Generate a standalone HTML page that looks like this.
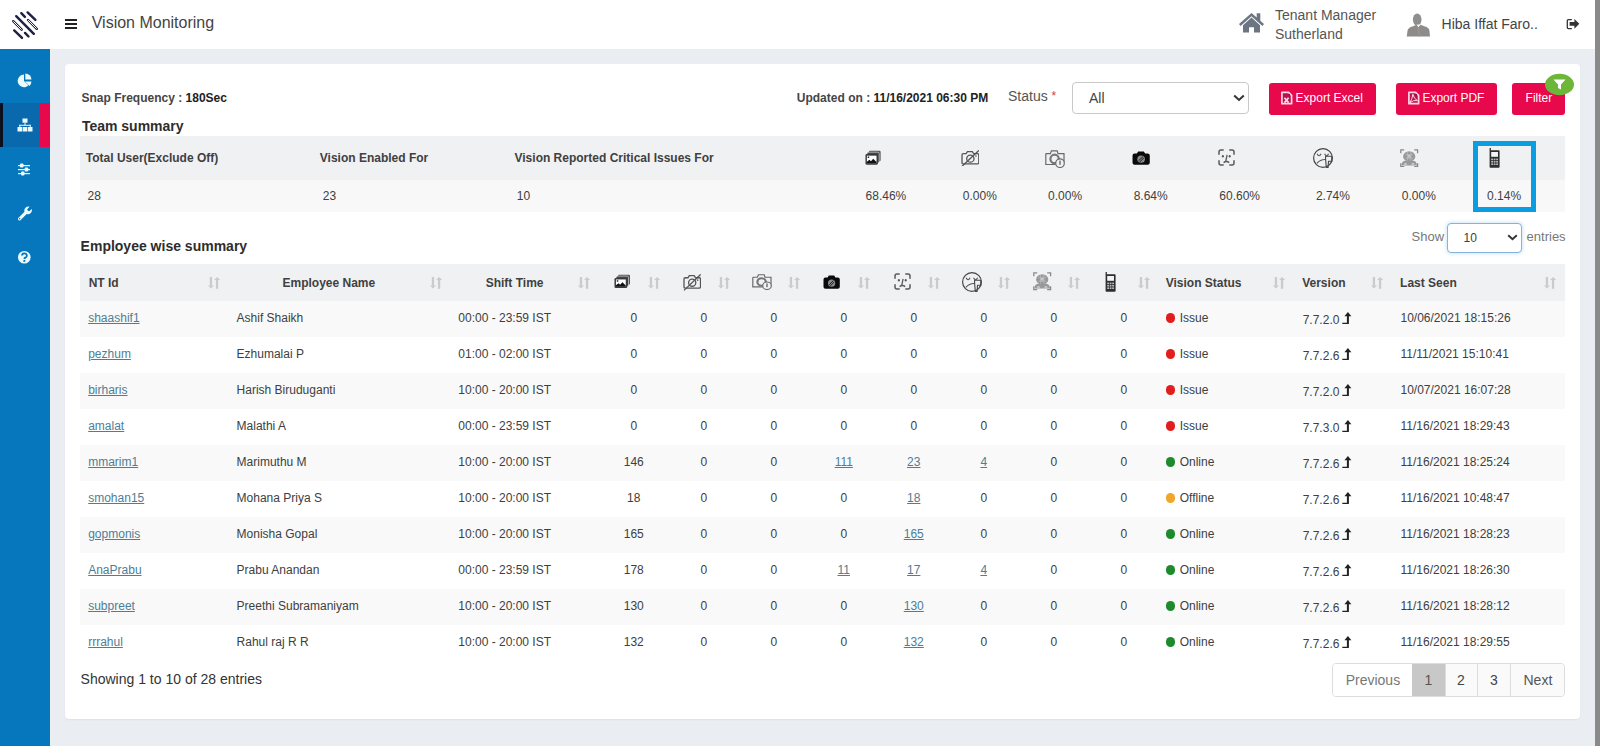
<!DOCTYPE html>
<html><head><meta charset="utf-8"><title>Vision Monitoring</title>
<style>
html,body{margin:0;padding:0;}
body{width:1600px;height:746px;overflow:hidden;position:relative;background:#eaedf1;font-family:"Liberation Sans",sans-serif;}
.t{position:absolute;white-space:nowrap;}
.r{position:absolute;}
a{color:inherit;}
</style></head><body>
<div class="r" style="left:0px;top:0px;width:1595px;height:49px;background:#fff;"></div>
<div class="r" style="left:1595px;top:0px;width:5px;height:746px;background:#8a8a8a;"></div>
<div class="r" style="left:0px;top:49px;width:50px;height:697px;background:#0676bd;"></div>
<div class="r" style="left:0px;top:103px;width:50px;height:44px;background:#0a68ad;"></div>
<div class="r" style="left:0px;top:103px;width:3px;height:44px;background:#0b0f1e;"></div>
<div class="r" style="left:40px;top:103px;width:10px;height:44px;background:#e8094d;"></div>
<div class="r" style="left:65px;top:64px;width:1515px;height:655px;background:#fff;border-radius:4px;box-shadow:0 1px 2px rgba(0,0,0,0.06);"></div>
<svg class="r" style="left:0px;top:0px;" width="50" height="50" viewBox="0 0 50 50"><g stroke="#1d2045" stroke-width="2.4" stroke-linecap="round" fill="none">
<line x1="21.3" y1="13.2" x2="24.9" y2="16.9"/>
<line x1="27.6" y1="12.4" x2="35.4" y2="19.9"/>
<line x1="16.2" y1="16.2" x2="33.8" y2="33.8"/>
<line x1="14.2" y1="30.4" x2="22" y2="37.9"/>
<line x1="25" y1="32.9" x2="28.5" y2="36.5"/>
<line x1="13.2" y1="21.2" x2="21.7" y2="29.7"/>
<line x1="28" y1="20" x2="36.8" y2="28.8"/>
</g>
<g stroke="#fff" stroke-width="1" stroke-linecap="round" fill="none">
<line x1="13.6" y1="21.6" x2="21.3" y2="29.3"/>
<line x1="28.4" y1="20.4" x2="36.4" y2="28.4"/>
</g></svg>
<div class="r" style="left:65px;top:19px;width:12px;height:2px;background:#222;"></div>
<div class="r" style="left:65px;top:23px;width:12px;height:2px;background:#222;"></div>
<div class="r" style="left:65px;top:27px;width:12px;height:2px;background:#222;"></div>
<div class="t " style="left:91.70px;top:15.06px;font-size:16px;line-height:16px;font-weight:400;color:#444;">Vision Monitoring</div>
<svg class="r" style="left:1238px;top:12px;" width="27" height="22" viewBox="0 0 27 22"><path fill="#6c7580" d="M13.5 1 L18.7 5.6 V1.2 H22.3 V8.8 L26 12.1 L24.4 13.9 L13.5 4.3 L2.6 13.9 L1 12.1 Z"/>
<path fill="#6c7580" d="M5 13.2 L13.5 5.6 L22 13.2 V20.6 H16 V15.2 H11 V20.6 H5 Z"/></svg>
<div class="t " style="left:1275.00px;top:7.85px;font-size:14px;line-height:14px;font-weight:400;color:#555;">Tenant Manager</div>
<div class="t " style="left:1275.00px;top:27.05px;font-size:14px;line-height:14px;font-weight:400;color:#555;">Sutherland</div>
<svg class="r" style="left:1406px;top:12px;" width="25" height="26" viewBox="0 0 25 26"><ellipse cx="11.2" cy="7.6" rx="4.3" ry="6.1" fill="#8e8e8e"/>
<path d="M0.8 24.6 L1.6 18.2 Q2.4 15.4 6.5 14.4 L10.6 12.8 L12.4 15 L14.6 12.8 L19 14.4 Q22.8 15.4 23.4 18.2 L24 24.6 Z" fill="#8c8c8c"/>
<path d="M10.6 12.8 L12.4 15 L14.6 12.8 L13.4 12.4 H11.4 Z" fill="#f2f2f2"/>
<path d="M11.6 15.4 L12.6 24.6 H13.6 L13.2 15.4 Z" fill="#a89484"/></svg>
<div class="t " style="left:1441.60px;top:16.65px;font-size:14px;line-height:14px;font-weight:400;color:#444;">Hiba Iffat Faro..</div>
<svg class="r" style="left:1566px;top:19px;" width="14" height="11" viewBox="0 0 14 11"><path d="M5.8 0.7 H2.4 Q1.3 0.7 1.3 1.8 V8.6 Q1.3 9.7 2.4 9.7 H5.8" stroke="#333" stroke-width="1.3" fill="none"/>
<path d="M3.6 3 H8.4 V0.1 L13.3 4.85 L8.4 9.7 V6.8 H3.6 Z" fill="#333"/></svg>
<svg class="r" style="left:17px;top:73px;" width="16" height="15" viewBox="0 0 16 15"><path d="M7 7.9 V1.6 A6.3 6.3 0 1 0 11.45 12.35 Z" fill="#eafbff"/>
<path d="M8.3 6.6 V0.4 A6.2 6.2 0 0 1 14.5 6.6 Z" fill="#eafbff"/>
<path d="M8 8.6 H14.4 A6.4 6.4 0 0 1 12.5 13.1 Z" fill="#eafbff"/></svg>
<svg class="r" style="left:17px;top:118px;" width="16" height="15" viewBox="0 0 16 15"><g fill="#eafbff"><rect x="5.5" y="0.5" width="5" height="4.2"/>
<rect x="0.5" y="9" width="4.6" height="4.5"/><rect x="5.7" y="9" width="4.6" height="4.5"/><rect x="10.9" y="9" width="4.6" height="4.5"/>
<rect x="7.5" y="4.5" width="1" height="3"/><rect x="2.3" y="6.8" width="11.4" height="1"/>
<rect x="2.3" y="6.8" width="1" height="2.2"/><rect x="12.7" y="6.8" width="1" height="2.2"/></g></svg>
<svg class="r" style="left:17px;top:163px;" width="14" height="13" viewBox="0 0 14 13"><g fill="#eafbff"><rect x="1" y="2" width="12" height="1.2"/><rect x="1" y="6" width="12" height="1.2"/><rect x="1" y="10" width="12" height="1.2"/>
<rect x="3" y="0.5" width="3.5" height="4" rx="1"/><rect x="7.7" y="4.5" width="3.5" height="4" rx="1"/><rect x="4" y="8.5" width="3.5" height="4" rx="1"/></g></svg>
<svg class="r" style="left:17px;top:206px;" width="15" height="15" viewBox="0 0 15 15"><path fill="#eafbff" d="M1.5 11.8 L7.5 5.8 A4 4 0 0 1 12.6 0.8 L10.2 3.2 L10.8 4.7 L12.3 5.3 L14.7 2.9 A4 4 0 0 1 9.7 8 L3.7 14 A1.55 1.55 0 0 1 1.5 11.8 Z"/>
<circle cx="2.7" cy="12.8" r="0.7" fill="#0676bd"/></svg>
<svg class="r" style="left:17px;top:250px;" width="15" height="15" viewBox="0 0 15 15"><circle cx="7.3" cy="7.3" r="6.3" fill="#eafbff"/>
<path d="M5 5.6 A2.4 2.2 0 1 1 8.3 7.6 Q7.4 8 7.4 9" stroke="#0676bd" stroke-width="1.8" fill="none"/>
<rect x="6.4" y="10" width="1.9" height="1.8" fill="#0676bd"/></svg>
<div class="t " style="left:81.50px;top:91.74px;font-size:12px;line-height:12px;font-weight:700;color:#454545;">Snap Frequency : <b style="color:#222">180Sec</b></div>
<div class="t " style="left:796.80px;top:91.54px;font-size:12px;line-height:12px;font-weight:700;color:#454545;">Updated on : <span style="color:#222">11/16/2021 06:30 PM</span></div>
<div class="t " style="left:1008.00px;top:89.05px;font-size:14px;line-height:14px;font-weight:400;color:#555;">Status</div>
<div class="t " style="left:1051.50px;top:90.04px;font-size:12px;line-height:12px;font-weight:400;color:#d9383a;">*</div>
<div class="r" style="left:1072px;top:82px;width:177px;height:32px;box-sizing:border-box;border:1px solid #c9c9c9;border-radius:4px;background:#fff;"></div>
<div class="t " style="left:1089.00px;top:91.05px;font-size:14px;line-height:14px;font-weight:400;color:#444;">All</div>
<svg class="r" style="left:1233px;top:94px;" width="12" height="8" viewBox="0 0 12 8"><path d="M1.2 1.5 L6 6 L10.8 1.5" stroke="#333" stroke-width="2" fill="none"/></svg>
<div class="r" style="left:1269px;top:83px;width:107px;height:32px;background:#e8084c;border-radius:3px;"></div>
<div class="r" style="left:1396px;top:83px;width:101px;height:32px;background:#e8084c;border-radius:3px;"></div>
<div class="r" style="left:1512px;top:83px;width:53px;height:32px;background:#e8084c;border-radius:3px;"></div>
<svg class="r" style="left:1280px;top:91px;" width="13" height="14" viewBox="0 0 13 14"><path d="M1.9 1.3 H8.6 L11.6 4.3 V12.7 H1.9 Z" fill="#b8114d" stroke="#ffd6e4" stroke-width="1.7" stroke-linejoin="round"/>
<circle cx="9.3" cy="3.7" r="0.8" fill="#8a0a38"/>
<path d="M4.4 6.8 L8.6 11.6 M8.6 6.8 L4.4 11.6" stroke="#ffe0ea" stroke-width="1.7"/></svg>
<div class="t " style="left:1295.60px;top:92.24px;font-size:12px;line-height:12px;font-weight:400;color:#fff;">Export Excel</div>
<svg class="r" style="left:1407px;top:91px;" width="13" height="14" viewBox="0 0 13 14"><path d="M1.9 1.3 H8.6 L11.6 4.3 V12.7 H1.9 Z" fill="#b8114d" stroke="#ffd6e4" stroke-width="1.7" stroke-linejoin="round"/>
<circle cx="9.3" cy="3.7" r="0.8" fill="#8a0a38"/>
<path d="M5.8 3.2 Q5.4 7.5 3 11.6 Q6.5 8.8 10.4 9.6 Q7 8 5.8 3.2 Z" stroke="#ffd6e4" stroke-width="1" fill="none"/></svg>
<div class="t " style="left:1422.40px;top:92.24px;font-size:12px;line-height:12px;font-weight:400;color:#fff;">Export PDF</div>
<div class="t " style="left:1525.60px;top:92.24px;font-size:12px;line-height:12px;font-weight:400;color:#fff;">Filter</div>
<svg class="r" style="left:1544px;top:73px;" width="31" height="23" viewBox="0 0 31 23"><ellipse cx="15.5" cy="11.5" rx="14.5" ry="10.7" fill="#6cb63a"/>
<path d="M9.5 6.5 H21.5 L17 11.5 V16.5 L14 15 V11.5 Z" fill="#fff"/></svg>
<div class="t " style="left:81.90px;top:118.75px;font-size:14px;line-height:14px;font-weight:700;color:#2d2d2d;">Team summary</div>
<div class="r" style="left:80px;top:136px;width:1485px;height:44px;background:#f0f1f3;"></div>
<div class="r" style="left:80px;top:180px;width:1485px;height:32px;background:#f8f8f9;"></div>
<div class="t " style="left:85.80px;top:152.04px;font-size:12px;line-height:12px;font-weight:700;color:#404040;">Total User(Exclude Off)</div>
<div class="t " style="left:319.80px;top:152.04px;font-size:12px;line-height:12px;font-weight:700;color:#404040;">Vision Enabled For</div>
<div class="t " style="left:514.50px;top:152.04px;font-size:12px;line-height:12px;font-weight:700;color:#404040;">Vision Reported Critical Issues For</div>
<div class="t " style="left:87.60px;top:189.74px;font-size:12px;line-height:12px;font-weight:400;color:#404040;">28</div>
<div class="t " style="left:322.80px;top:189.74px;font-size:12px;line-height:12px;font-weight:400;color:#404040;">23</div>
<div class="t " style="left:516.80px;top:189.74px;font-size:12px;line-height:12px;font-weight:400;color:#404040;">10</div>
<div class="t " style="left:865.60px;top:189.64px;font-size:12px;line-height:12px;font-weight:400;color:#404040;">68.46%</div>
<div class="t " style="left:962.80px;top:189.64px;font-size:12px;line-height:12px;font-weight:400;color:#404040;">0.00%</div>
<div class="t " style="left:1048.10px;top:189.64px;font-size:12px;line-height:12px;font-weight:400;color:#404040;">0.00%</div>
<div class="t " style="left:1133.70px;top:189.64px;font-size:12px;line-height:12px;font-weight:400;color:#404040;">8.64%</div>
<div class="t " style="left:1219.30px;top:189.64px;font-size:12px;line-height:12px;font-weight:400;color:#404040;">60.60%</div>
<div class="t " style="left:1315.90px;top:189.64px;font-size:12px;line-height:12px;font-weight:400;color:#404040;">2.74%</div>
<div class="t " style="left:1401.80px;top:189.64px;font-size:12px;line-height:12px;font-weight:400;color:#404040;">0.00%</div>
<div class="t " style="left:1487.10px;top:189.64px;font-size:12px;line-height:12px;font-weight:400;color:#404040;">0.14%</div>
<div class="r" style="left:1473px;top:141px;width:63px;height:71px;box-sizing:border-box;border:5px solid #0a9de2;"></div>
<svg class="r" style="left:864.7px;top:150px;" width="16.30" height="15.20" viewBox="0 0 17 15" preserveAspectRatio="none"><rect x="4" y="0.7" width="12.3" height="10.3" rx="1.2" fill="#555"/>
<rect x="2.2" y="2.2" width="12.6" height="10.4" rx="1.2" fill="#444" stroke="#f0f1f3" stroke-width="0.6"/>
<rect x="0.5" y="4" width="13" height="10.5" rx="1.4" fill="#3a3a3a"/>
<rect x="2" y="5.6" width="10" height="7.4" fill="#fff"/>
<path d="M2 13 L2 11.6 L4.6 9.6 L6.2 11 L8.6 8.6 L12 11.8 L12 13 Z" fill="#111"/>
<circle cx="3.6" cy="7.1" r="0.9" fill="#333"/></svg>
<svg class="r" style="left:960.6px;top:149.8px;" width="18.80" height="16.70" viewBox="0 0 18.5 17" preserveAspectRatio="none"><g stroke="#555" stroke-width="1.3" fill="none">
<path d="M1 5 Q1 3.8 2.2 3.8 H5 L6.3 1.6 H11.2 L12.5 3.8 H16.3 Q17.5 3.8 17.5 5 V13 Q17.5 14.2 16.3 14.2 H2.2 Q1 14.2 1 13 Z"/>
<circle cx="9.2" cy="8.8" r="3.6"/>
<line x1="1" y1="16.6" x2="17.6" y2="0.4"/></g>
<circle cx="14.7" cy="6.2" r="0.8" fill="#555"/></svg>
<svg class="r" style="left:1045px;top:150px;" width="20.50" height="18.00" viewBox="0 0 20.5 18" preserveAspectRatio="none"><g stroke="#6a6a6a" fill="none">
<path d="M0.8 3.6 H5.4 L6.4 0.9 H12.2 L13 3.6 H19 V12" stroke-width="1.2"/>
<path d="M0.8 3.6 V14.5 H10.5" stroke-width="1.2"/>
<circle cx="9.6" cy="8.9" r="4.2" stroke-width="2.2" stroke="#777"/></g>
<circle cx="15" cy="13.2" r="4.3" fill="#f0f1f3" stroke="#6a6a6a" stroke-width="1.2"/>
<rect x="14.4" y="10.6" width="1.2" height="4.2" fill="#555"/></svg>
<svg class="r" style="left:1131.7px;top:151px;" width="18.30" height="14.20" viewBox="0 0 17.3 14.2" preserveAspectRatio="none"><path d="M0.5 4.5 Q0.5 2.6 2.4 2.6 H4.6 L5.8 0.4 H11.2 L12.4 2.6 H14.8 Q16.8 2.6 16.8 4.5 V11.8 Q16.8 13.8 14.8 13.8 H2.4 Q0.5 13.8 0.5 11.8 Z" fill="#0a0a0a"/>
<circle cx="8.6" cy="8.2" r="3.6" fill="#8a8a8a"/>
<path d="M6.2 9.8 L10.4 5.6 M7.2 11 L11.2 7" stroke="#111" stroke-width="0.9"/></svg>
<svg class="r" style="left:1218.3px;top:149px;" width="17.00" height="17.00" viewBox="0 0 17 17" preserveAspectRatio="none"><g stroke="#5a5a5a" stroke-width="1.5" fill="none" stroke-linecap="round">
<path d="M1 5.2 V3 Q1 1 3 1 H5.2"/><path d="M11.8 1 H14 Q16 1 16 3 V5.2"/>
<path d="M1 11.8 V14 Q1 16 3 16 H5.2"/><path d="M11.8 16 H14 Q16 16 16 14 V11.8"/></g>
<g stroke="#5a5a5a" fill="none"><path d="M9.1 5.8 L7.8 12.2" stroke-width="1.3"/><path d="M5.6 13.6 Q8.4 11.4 11.2 13.6" stroke-width="1.4"/></g>
<ellipse cx="4.9" cy="7.2" rx="1" ry="1.3" fill="#555"/><ellipse cx="11.7" cy="7.2" rx="1" ry="1.3" fill="#555"/></svg>
<svg class="r" style="left:1313px;top:148px;" width="20.40" height="20.40" viewBox="0 0 20.4 20.4" preserveAspectRatio="none"><g stroke="#555" stroke-width="1.1" fill="none">
<path d="M4.1 5.8 Q6.1 9.8 8.1 5.8"/><path d="M11.6 5.8 Q13.6 9.8 15.6 5.8"/>
<path d="M3.8 15.4 Q7.8 11.2 12.6 11.6"/></g>
<path d="M12.6 8.2 H18.8 V13.3 H15.5 L15.1 19.4 H13.3 L12.6 11 Z" fill="#f0f1f3" stroke="#444" stroke-width="1.1" stroke-linejoin="round"/>
<circle cx="10" cy="10" r="9.4" stroke="#444" stroke-width="1.2" fill="none"/></svg>
<svg class="r" style="left:1400px;top:148.6px;" width="18.50" height="18.50" viewBox="0 0 18.5 18.5" preserveAspectRatio="none"><g stroke="#8a8a8a" stroke-width="1.3" fill="none">
<path d="M0.8 4.2 V0.8 H4.2"/><path d="M14.2 0.8 H17.6 V4.2"/><path d="M0.8 14.2 V17.6 H4.2"/><path d="M14.2 17.6 H17.6 V14.2"/></g>
<ellipse cx="9.2" cy="7.4" rx="6.1" ry="5.2" fill="#999"/>
<path d="M5.6 5.6 H12.8 M5.6 9.2 H12.8 M7.6 3 V12 M10.8 3 V12" stroke="#b8b8b8" stroke-width="0.9"/>
<rect x="7.8" y="6" width="2.8" height="2.6" fill="#c8c8c8"/>
<path d="M1.4 16.4 Q1.6 11.6 6 11.4 H12.4 Q16.8 11.6 17 16.4 Z" fill="#999"/>
<path d="M3.6 15.6 Q5.4 12.8 7.4 15.6 Z M11 15.6 Q13 12.8 14.8 15.6 Z" fill="#e6e6e6"/></svg>
<svg class="r" style="left:1488.6px;top:148px;" width="11.20" height="19.80" viewBox="0 0 11.2 19.8" preserveAspectRatio="none"><rect x="0.6" y="0" width="1.3" height="3" fill="#333"/>
<rect x="0.6" y="2.3" width="10" height="17.4" rx="0.8" fill="#2e2e2e"/>
<rect x="2.2" y="4" width="6.8" height="4.8" fill="#f4f4f4"/>
<g fill="#bbb"><rect x="2.2" y="10.6" width="1.8" height="1.6"/><rect x="4.7" y="10.6" width="1.8" height="1.6"/><rect x="7.2" y="10.6" width="1.8" height="1.6"/>
<rect x="2.2" y="13" width="1.8" height="1.6"/><rect x="4.7" y="13" width="1.8" height="1.6"/><rect x="7.2" y="13" width="1.8" height="1.6"/>
<rect x="2.2" y="15.4" width="1.8" height="1.6"/><rect x="4.7" y="15.4" width="1.8" height="1.6"/><rect x="7.2" y="15.4" width="1.8" height="1.6"/></g></svg>
<div class="t " style="left:80.60px;top:239.15px;font-size:14px;line-height:14px;font-weight:700;color:#2d2d2d;">Employee wise summary</div>
<div class="t " style="left:1411.60px;top:229.60px;font-size:13px;line-height:13px;font-weight:400;color:#777;">Show</div>
<div class="r" style="left:1447px;top:223px;width:75px;height:30px;box-sizing:border-box;border:1px solid #86b3d9;border-radius:4px;background:#fff;box-shadow:0 0 4px rgba(102,175,233,0.45);"></div>
<div class="t " style="left:1463.60px;top:231.64px;font-size:12px;line-height:12px;font-weight:400;color:#404040;">10</div>
<svg class="r" style="left:1506.5px;top:234px;" width="11" height="7" viewBox="0 0 11 7"><path d="M1.2 1.2 L5.5 5.3 L9.8 1.2" stroke="#333" stroke-width="1.9" fill="none"/></svg>
<div class="t " style="left:1526.60px;top:229.60px;font-size:13px;line-height:13px;font-weight:400;color:#777;">entries</div>
<div class="r" style="left:80px;top:264px;width:1485px;height:37px;background:#f0f1f3;"></div>
<div class="t " style="left:88.70px;top:276.84px;font-size:12px;line-height:12px;font-weight:700;color:#404040;">NT Id</div>
<div class="t " style="left:282.50px;top:276.84px;font-size:12px;line-height:12px;font-weight:700;color:#404040;">Employee Name</div>
<div class="t " style="left:485.70px;top:276.84px;font-size:12px;line-height:12px;font-weight:700;color:#404040;">Shift Time</div>
<div class="t " style="left:1165.70px;top:276.84px;font-size:12px;line-height:12px;font-weight:700;color:#404040;">Vision Status</div>
<div class="t " style="left:1302.20px;top:276.84px;font-size:12px;line-height:12px;font-weight:700;color:#404040;">Version</div>
<div class="t " style="left:1400.10px;top:276.84px;font-size:12px;line-height:12px;font-weight:700;color:#404040;">Last Seen</div>
<svg class="r" style="left:208.3px;top:277px;" width="12" height="12" viewBox="0 0 12 12"><g fill="#cbcbcb"><rect x="1.8" y="0" width="2.3" height="8.8"/><path d="M-0.1 8.4 H6 L2.95 11.6 Z"/><rect x="7.9" y="2.6" width="2.3" height="9.2"/><path d="M6.1 2.9 H12.1 L9.05 0 Z"/></g></svg>
<svg class="r" style="left:429.8px;top:277px;" width="12" height="12" viewBox="0 0 12 12"><g fill="#cbcbcb"><rect x="1.8" y="0" width="2.3" height="8.8"/><path d="M-0.1 8.4 H6 L2.95 11.6 Z"/><rect x="7.9" y="2.6" width="2.3" height="9.2"/><path d="M6.1 2.9 H12.1 L9.05 0 Z"/></g></svg>
<svg class="r" style="left:578.3px;top:277px;" width="12" height="12" viewBox="0 0 12 12"><g fill="#cbcbcb"><rect x="1.8" y="0" width="2.3" height="8.8"/><path d="M-0.1 8.4 H6 L2.95 11.6 Z"/><rect x="7.9" y="2.6" width="2.3" height="9.2"/><path d="M6.1 2.9 H12.1 L9.05 0 Z"/></g></svg>
<svg class="r" style="left:648.0px;top:277px;" width="12" height="12" viewBox="0 0 12 12"><g fill="#cbcbcb"><rect x="1.8" y="0" width="2.3" height="8.8"/><path d="M-0.1 8.4 H6 L2.95 11.6 Z"/><rect x="7.9" y="2.6" width="2.3" height="9.2"/><path d="M6.1 2.9 H12.1 L9.05 0 Z"/></g></svg>
<svg class="r" style="left:718.0px;top:277px;" width="12" height="12" viewBox="0 0 12 12"><g fill="#cbcbcb"><rect x="1.8" y="0" width="2.3" height="8.8"/><path d="M-0.1 8.4 H6 L2.95 11.6 Z"/><rect x="7.9" y="2.6" width="2.3" height="9.2"/><path d="M6.1 2.9 H12.1 L9.05 0 Z"/></g></svg>
<svg class="r" style="left:788.0px;top:277px;" width="12" height="12" viewBox="0 0 12 12"><g fill="#cbcbcb"><rect x="1.8" y="0" width="2.3" height="8.8"/><path d="M-0.1 8.4 H6 L2.95 11.6 Z"/><rect x="7.9" y="2.6" width="2.3" height="9.2"/><path d="M6.1 2.9 H12.1 L9.05 0 Z"/></g></svg>
<svg class="r" style="left:858.0px;top:277px;" width="12" height="12" viewBox="0 0 12 12"><g fill="#cbcbcb"><rect x="1.8" y="0" width="2.3" height="8.8"/><path d="M-0.1 8.4 H6 L2.95 11.6 Z"/><rect x="7.9" y="2.6" width="2.3" height="9.2"/><path d="M6.1 2.9 H12.1 L9.05 0 Z"/></g></svg>
<svg class="r" style="left:928.0px;top:277px;" width="12" height="12" viewBox="0 0 12 12"><g fill="#cbcbcb"><rect x="1.8" y="0" width="2.3" height="8.8"/><path d="M-0.1 8.4 H6 L2.95 11.6 Z"/><rect x="7.9" y="2.6" width="2.3" height="9.2"/><path d="M6.1 2.9 H12.1 L9.05 0 Z"/></g></svg>
<svg class="r" style="left:998.0px;top:277px;" width="12" height="12" viewBox="0 0 12 12"><g fill="#cbcbcb"><rect x="1.8" y="0" width="2.3" height="8.8"/><path d="M-0.1 8.4 H6 L2.95 11.6 Z"/><rect x="7.9" y="2.6" width="2.3" height="9.2"/><path d="M6.1 2.9 H12.1 L9.05 0 Z"/></g></svg>
<svg class="r" style="left:1068.0px;top:277px;" width="12" height="12" viewBox="0 0 12 12"><g fill="#cbcbcb"><rect x="1.8" y="0" width="2.3" height="8.8"/><path d="M-0.1 8.4 H6 L2.95 11.6 Z"/><rect x="7.9" y="2.6" width="2.3" height="9.2"/><path d="M6.1 2.9 H12.1 L9.05 0 Z"/></g></svg>
<svg class="r" style="left:1138.0px;top:277px;" width="12" height="12" viewBox="0 0 12 12"><g fill="#cbcbcb"><rect x="1.8" y="0" width="2.3" height="8.8"/><path d="M-0.1 8.4 H6 L2.95 11.6 Z"/><rect x="7.9" y="2.6" width="2.3" height="9.2"/><path d="M6.1 2.9 H12.1 L9.05 0 Z"/></g></svg>
<svg class="r" style="left:1273.2px;top:277px;" width="12" height="12" viewBox="0 0 12 12"><g fill="#cbcbcb"><rect x="1.8" y="0" width="2.3" height="8.8"/><path d="M-0.1 8.4 H6 L2.95 11.6 Z"/><rect x="7.9" y="2.6" width="2.3" height="9.2"/><path d="M6.1 2.9 H12.1 L9.05 0 Z"/></g></svg>
<svg class="r" style="left:1371.0px;top:277px;" width="12" height="12" viewBox="0 0 12 12"><g fill="#cbcbcb"><rect x="1.8" y="0" width="2.3" height="8.8"/><path d="M-0.1 8.4 H6 L2.95 11.6 Z"/><rect x="7.9" y="2.6" width="2.3" height="9.2"/><path d="M6.1 2.9 H12.1 L9.05 0 Z"/></g></svg>
<svg class="r" style="left:1544.3px;top:277px;" width="12" height="12" viewBox="0 0 12 12"><g fill="#cbcbcb"><rect x="1.8" y="0" width="2.3" height="8.8"/><path d="M-0.1 8.4 H6 L2.95 11.6 Z"/><rect x="7.9" y="2.6" width="2.3" height="9.2"/><path d="M6.1 2.9 H12.1 L9.05 0 Z"/></g></svg>
<svg class="r" style="left:613.6px;top:274px;" width="16.70" height="14.60" viewBox="0 0 17 15" preserveAspectRatio="none"><rect x="4" y="0.7" width="12.3" height="10.3" rx="1.2" fill="#555"/>
<rect x="2.2" y="2.2" width="12.6" height="10.4" rx="1.2" fill="#444" stroke="#f0f1f3" stroke-width="0.6"/>
<rect x="0.5" y="4" width="13" height="10.5" rx="1.4" fill="#3a3a3a"/>
<rect x="2" y="5.6" width="10" height="7.4" fill="#fff"/>
<path d="M2 13 L2 11.6 L4.6 9.6 L6.2 11 L8.6 8.6 L12 11.8 L12 13 Z" fill="#111"/>
<circle cx="3.6" cy="7.1" r="0.9" fill="#333"/></svg>
<svg class="r" style="left:682.8px;top:274px;" width="18.50" height="16.80" viewBox="0 0 18.5 17" preserveAspectRatio="none"><g stroke="#555" stroke-width="1.3" fill="none">
<path d="M1 5 Q1 3.8 2.2 3.8 H5 L6.3 1.6 H11.2 L12.5 3.8 H16.3 Q17.5 3.8 17.5 5 V13 Q17.5 14.2 16.3 14.2 H2.2 Q1 14.2 1 13 Z"/>
<circle cx="9.2" cy="8.8" r="3.6"/>
<line x1="1" y1="16.6" x2="17.6" y2="0.4"/></g>
<circle cx="14.7" cy="6.2" r="0.8" fill="#555"/></svg>
<svg class="r" style="left:752px;top:273.8px;" width="20.50" height="16.00" viewBox="0 0 20.5 18" preserveAspectRatio="none"><g stroke="#6a6a6a" fill="none">
<path d="M0.8 3.6 H5.4 L6.4 0.9 H12.2 L13 3.6 H19 V12" stroke-width="1.2"/>
<path d="M0.8 3.6 V14.5 H10.5" stroke-width="1.2"/>
<circle cx="9.6" cy="8.9" r="4.2" stroke-width="2.2" stroke="#777"/></g>
<circle cx="15" cy="13.2" r="4.3" fill="#f0f1f3" stroke="#6a6a6a" stroke-width="1.2"/>
<rect x="14.4" y="10.6" width="1.2" height="4.2" fill="#555"/></svg>
<svg class="r" style="left:823px;top:274.6px;" width="17.30" height="14.20" viewBox="0 0 17.3 14.2" preserveAspectRatio="none"><path d="M0.5 4.5 Q0.5 2.6 2.4 2.6 H4.6 L5.8 0.4 H11.2 L12.4 2.6 H14.8 Q16.8 2.6 16.8 4.5 V11.8 Q16.8 13.8 14.8 13.8 H2.4 Q0.5 13.8 0.5 11.8 Z" fill="#0a0a0a"/>
<circle cx="8.6" cy="8.2" r="3.6" fill="#8a8a8a"/>
<path d="M6.2 9.8 L10.4 5.6 M7.2 11 L11.2 7" stroke="#111" stroke-width="0.9"/></svg>
<svg class="r" style="left:894.4px;top:273.2px;" width="17.00" height="17.00" viewBox="0 0 17 17" preserveAspectRatio="none"><g stroke="#5a5a5a" stroke-width="1.5" fill="none" stroke-linecap="round">
<path d="M1 5.2 V3 Q1 1 3 1 H5.2"/><path d="M11.8 1 H14 Q16 1 16 3 V5.2"/>
<path d="M1 11.8 V14 Q1 16 3 16 H5.2"/><path d="M11.8 16 H14 Q16 16 16 14 V11.8"/></g>
<g stroke="#5a5a5a" fill="none"><path d="M9.1 5.8 L7.8 12.2" stroke-width="1.3"/><path d="M5.6 13.6 Q8.4 11.4 11.2 13.6" stroke-width="1.4"/></g>
<ellipse cx="4.9" cy="7.2" rx="1" ry="1.3" fill="#555"/><ellipse cx="11.7" cy="7.2" rx="1" ry="1.3" fill="#555"/></svg>
<svg class="r" style="left:962px;top:271.8px;" width="20.40" height="20.40" viewBox="0 0 20.4 20.4" preserveAspectRatio="none"><g stroke="#555" stroke-width="1.1" fill="none">
<path d="M4.1 5.8 Q6.1 9.8 8.1 5.8"/><path d="M11.6 5.8 Q13.6 9.8 15.6 5.8"/>
<path d="M3.8 15.4 Q7.8 11.2 12.6 11.6"/></g>
<path d="M12.6 8.2 H18.8 V13.3 H15.5 L15.1 19.4 H13.3 L12.6 11 Z" fill="#f0f1f3" stroke="#444" stroke-width="1.1" stroke-linejoin="round"/>
<circle cx="10" cy="10" r="9.4" stroke="#444" stroke-width="1.2" fill="none"/></svg>
<svg class="r" style="left:1033px;top:272.4px;" width="18.50" height="18.50" viewBox="0 0 18.5 18.5" preserveAspectRatio="none"><g stroke="#8a8a8a" stroke-width="1.3" fill="none">
<path d="M0.8 4.2 V0.8 H4.2"/><path d="M14.2 0.8 H17.6 V4.2"/><path d="M0.8 14.2 V17.6 H4.2"/><path d="M14.2 17.6 H17.6 V14.2"/></g>
<ellipse cx="9.2" cy="7.4" rx="6.1" ry="5.2" fill="#999"/>
<path d="M5.6 5.6 H12.8 M5.6 9.2 H12.8 M7.6 3 V12 M10.8 3 V12" stroke="#b8b8b8" stroke-width="0.9"/>
<rect x="7.8" y="6" width="2.8" height="2.6" fill="#c8c8c8"/>
<path d="M1.4 16.4 Q1.6 11.6 6 11.4 H12.4 Q16.8 11.6 17 16.4 Z" fill="#999"/>
<path d="M3.6 15.6 Q5.4 12.8 7.4 15.6 Z M11 15.6 Q13 12.8 14.8 15.6 Z" fill="#e6e6e6"/></svg>
<svg class="r" style="left:1105.3px;top:272.2px;" width="11.20" height="19.80" viewBox="0 0 11.2 19.8" preserveAspectRatio="none"><rect x="0.6" y="0" width="1.3" height="3" fill="#333"/>
<rect x="0.6" y="2.3" width="10" height="17.4" rx="0.8" fill="#2e2e2e"/>
<rect x="2.2" y="4" width="6.8" height="4.8" fill="#f4f4f4"/>
<g fill="#bbb"><rect x="2.2" y="10.6" width="1.8" height="1.6"/><rect x="4.7" y="10.6" width="1.8" height="1.6"/><rect x="7.2" y="10.6" width="1.8" height="1.6"/>
<rect x="2.2" y="13" width="1.8" height="1.6"/><rect x="4.7" y="13" width="1.8" height="1.6"/><rect x="7.2" y="13" width="1.8" height="1.6"/>
<rect x="2.2" y="15.4" width="1.8" height="1.6"/><rect x="4.7" y="15.4" width="1.8" height="1.6"/><rect x="7.2" y="15.4" width="1.8" height="1.6"/></g></svg>
<div class="r" style="left:80px;top:301px;width:1485px;height:36px;background:#f9f9f9;"></div>
<div class="t " style="left:88.20px;top:311.54px;font-size:12px;line-height:12px;font-weight:400;color:#4d7e96;"><span style="text-decoration:underline">shaashif1</span></div>
<div class="t " style="left:236.60px;top:311.54px;font-size:12px;line-height:12px;font-weight:400;color:#404040;">Ashif Shaikh</div>
<div class="t " style="left:458.30px;top:311.54px;font-size:12px;line-height:12px;font-weight:400;color:#404040;">00:00 - 23:59 IST</div>
<div class="t" style="left:598.75px;width:70px;text-align:center;top:311.54px;font-size:12px;line-height:12px;color:#404040;"><span style="">0</span></div>
<div class="t" style="left:668.75px;width:70px;text-align:center;top:311.54px;font-size:12px;line-height:12px;color:#404040;"><span style="">0</span></div>
<div class="t" style="left:738.75px;width:70px;text-align:center;top:311.54px;font-size:12px;line-height:12px;color:#404040;"><span style="">0</span></div>
<div class="t" style="left:808.75px;width:70px;text-align:center;top:311.54px;font-size:12px;line-height:12px;color:#404040;"><span style="">0</span></div>
<div class="t" style="left:878.75px;width:70px;text-align:center;top:311.54px;font-size:12px;line-height:12px;color:#404040;"><span style="">0</span></div>
<div class="t" style="left:948.75px;width:70px;text-align:center;top:311.54px;font-size:12px;line-height:12px;color:#404040;"><span style="">0</span></div>
<div class="t" style="left:1018.75px;width:70px;text-align:center;top:311.54px;font-size:12px;line-height:12px;color:#404040;"><span style="">0</span></div>
<div class="t" style="left:1088.75px;width:70px;text-align:center;top:311.54px;font-size:12px;line-height:12px;color:#404040;"><span style="">0</span></div>
<div class="r" style="left:1165.8px;top:313px;width:9.6px;height:9.6px;border-radius:50%;background:#e21d1d;"></div>
<div class="t " style="left:1179.70px;top:311.54px;font-size:12px;line-height:12px;font-weight:400;color:#404040;">Issue</div>
<div class="t " style="left:1302.70px;top:313.74px;font-size:12px;line-height:12px;font-weight:400;color:#404040;">7.7.2.0</div>
<svg class="r" style="left:1342px;top:311.8px;" width="10" height="12.5" viewBox="0 0 10 12.5"><path d="M5.9 0 L9.4 4.3 H6.9 V12.2 H0.3 V10.7 H4.9 V4.3 H2.4 Z" fill="#222"/></svg>
<div class="t " style="left:1400.50px;top:311.54px;font-size:12px;line-height:12px;font-weight:400;color:#404040;">10/06/2021 18:15:26</div>
<div class="t " style="left:88.20px;top:347.54px;font-size:12px;line-height:12px;font-weight:400;color:#4d7e96;"><span style="text-decoration:underline">pezhum</span></div>
<div class="t " style="left:236.60px;top:347.54px;font-size:12px;line-height:12px;font-weight:400;color:#404040;">Ezhumalai P</div>
<div class="t " style="left:458.30px;top:347.54px;font-size:12px;line-height:12px;font-weight:400;color:#404040;">01:00 - 02:00 IST</div>
<div class="t" style="left:598.75px;width:70px;text-align:center;top:347.54px;font-size:12px;line-height:12px;color:#404040;"><span style="">0</span></div>
<div class="t" style="left:668.75px;width:70px;text-align:center;top:347.54px;font-size:12px;line-height:12px;color:#404040;"><span style="">0</span></div>
<div class="t" style="left:738.75px;width:70px;text-align:center;top:347.54px;font-size:12px;line-height:12px;color:#404040;"><span style="">0</span></div>
<div class="t" style="left:808.75px;width:70px;text-align:center;top:347.54px;font-size:12px;line-height:12px;color:#404040;"><span style="">0</span></div>
<div class="t" style="left:878.75px;width:70px;text-align:center;top:347.54px;font-size:12px;line-height:12px;color:#404040;"><span style="">0</span></div>
<div class="t" style="left:948.75px;width:70px;text-align:center;top:347.54px;font-size:12px;line-height:12px;color:#404040;"><span style="">0</span></div>
<div class="t" style="left:1018.75px;width:70px;text-align:center;top:347.54px;font-size:12px;line-height:12px;color:#404040;"><span style="">0</span></div>
<div class="t" style="left:1088.75px;width:70px;text-align:center;top:347.54px;font-size:12px;line-height:12px;color:#404040;"><span style="">0</span></div>
<div class="r" style="left:1165.8px;top:349px;width:9.6px;height:9.6px;border-radius:50%;background:#e21d1d;"></div>
<div class="t " style="left:1179.70px;top:347.54px;font-size:12px;line-height:12px;font-weight:400;color:#404040;">Issue</div>
<div class="t " style="left:1302.70px;top:349.74px;font-size:12px;line-height:12px;font-weight:400;color:#404040;">7.7.2.6</div>
<svg class="r" style="left:1342px;top:347.8px;" width="10" height="12.5" viewBox="0 0 10 12.5"><path d="M5.9 0 L9.4 4.3 H6.9 V12.2 H0.3 V10.7 H4.9 V4.3 H2.4 Z" fill="#222"/></svg>
<div class="t " style="left:1400.50px;top:347.54px;font-size:12px;line-height:12px;font-weight:400;color:#404040;">11/11/2021 15:10:41</div>
<div class="r" style="left:80px;top:373px;width:1485px;height:36px;background:#f9f9f9;"></div>
<div class="t " style="left:88.20px;top:383.54px;font-size:12px;line-height:12px;font-weight:400;color:#4d7e96;"><span style="text-decoration:underline">birharis</span></div>
<div class="t " style="left:236.60px;top:383.54px;font-size:12px;line-height:12px;font-weight:400;color:#404040;">Harish Biruduganti</div>
<div class="t " style="left:458.30px;top:383.54px;font-size:12px;line-height:12px;font-weight:400;color:#404040;">10:00 - 20:00 IST</div>
<div class="t" style="left:598.75px;width:70px;text-align:center;top:383.54px;font-size:12px;line-height:12px;color:#404040;"><span style="">0</span></div>
<div class="t" style="left:668.75px;width:70px;text-align:center;top:383.54px;font-size:12px;line-height:12px;color:#404040;"><span style="">0</span></div>
<div class="t" style="left:738.75px;width:70px;text-align:center;top:383.54px;font-size:12px;line-height:12px;color:#404040;"><span style="">0</span></div>
<div class="t" style="left:808.75px;width:70px;text-align:center;top:383.54px;font-size:12px;line-height:12px;color:#404040;"><span style="">0</span></div>
<div class="t" style="left:878.75px;width:70px;text-align:center;top:383.54px;font-size:12px;line-height:12px;color:#404040;"><span style="">0</span></div>
<div class="t" style="left:948.75px;width:70px;text-align:center;top:383.54px;font-size:12px;line-height:12px;color:#404040;"><span style="">0</span></div>
<div class="t" style="left:1018.75px;width:70px;text-align:center;top:383.54px;font-size:12px;line-height:12px;color:#404040;"><span style="">0</span></div>
<div class="t" style="left:1088.75px;width:70px;text-align:center;top:383.54px;font-size:12px;line-height:12px;color:#404040;"><span style="">0</span></div>
<div class="r" style="left:1165.8px;top:385px;width:9.6px;height:9.6px;border-radius:50%;background:#e21d1d;"></div>
<div class="t " style="left:1179.70px;top:383.54px;font-size:12px;line-height:12px;font-weight:400;color:#404040;">Issue</div>
<div class="t " style="left:1302.70px;top:385.74px;font-size:12px;line-height:12px;font-weight:400;color:#404040;">7.7.2.0</div>
<svg class="r" style="left:1342px;top:383.8px;" width="10" height="12.5" viewBox="0 0 10 12.5"><path d="M5.9 0 L9.4 4.3 H6.9 V12.2 H0.3 V10.7 H4.9 V4.3 H2.4 Z" fill="#222"/></svg>
<div class="t " style="left:1400.50px;top:383.54px;font-size:12px;line-height:12px;font-weight:400;color:#404040;">10/07/2021 16:07:28</div>
<div class="t " style="left:88.20px;top:419.54px;font-size:12px;line-height:12px;font-weight:400;color:#4d7e96;"><span style="text-decoration:underline">amalat</span></div>
<div class="t " style="left:236.60px;top:419.54px;font-size:12px;line-height:12px;font-weight:400;color:#404040;">Malathi A</div>
<div class="t " style="left:458.30px;top:419.54px;font-size:12px;line-height:12px;font-weight:400;color:#404040;">00:00 - 23:59 IST</div>
<div class="t" style="left:598.75px;width:70px;text-align:center;top:419.54px;font-size:12px;line-height:12px;color:#404040;"><span style="">0</span></div>
<div class="t" style="left:668.75px;width:70px;text-align:center;top:419.54px;font-size:12px;line-height:12px;color:#404040;"><span style="">0</span></div>
<div class="t" style="left:738.75px;width:70px;text-align:center;top:419.54px;font-size:12px;line-height:12px;color:#404040;"><span style="">0</span></div>
<div class="t" style="left:808.75px;width:70px;text-align:center;top:419.54px;font-size:12px;line-height:12px;color:#404040;"><span style="">0</span></div>
<div class="t" style="left:878.75px;width:70px;text-align:center;top:419.54px;font-size:12px;line-height:12px;color:#404040;"><span style="">0</span></div>
<div class="t" style="left:948.75px;width:70px;text-align:center;top:419.54px;font-size:12px;line-height:12px;color:#404040;"><span style="">0</span></div>
<div class="t" style="left:1018.75px;width:70px;text-align:center;top:419.54px;font-size:12px;line-height:12px;color:#404040;"><span style="">0</span></div>
<div class="t" style="left:1088.75px;width:70px;text-align:center;top:419.54px;font-size:12px;line-height:12px;color:#404040;"><span style="">0</span></div>
<div class="r" style="left:1165.8px;top:421px;width:9.6px;height:9.6px;border-radius:50%;background:#e21d1d;"></div>
<div class="t " style="left:1179.70px;top:419.54px;font-size:12px;line-height:12px;font-weight:400;color:#404040;">Issue</div>
<div class="t " style="left:1302.70px;top:421.74px;font-size:12px;line-height:12px;font-weight:400;color:#404040;">7.7.3.0</div>
<svg class="r" style="left:1342px;top:419.8px;" width="10" height="12.5" viewBox="0 0 10 12.5"><path d="M5.9 0 L9.4 4.3 H6.9 V12.2 H0.3 V10.7 H4.9 V4.3 H2.4 Z" fill="#222"/></svg>
<div class="t " style="left:1400.50px;top:419.54px;font-size:12px;line-height:12px;font-weight:400;color:#404040;">11/16/2021 18:29:43</div>
<div class="r" style="left:80px;top:445px;width:1485px;height:36px;background:#f9f9f9;"></div>
<div class="t " style="left:88.20px;top:455.54px;font-size:12px;line-height:12px;font-weight:400;color:#4d7e96;"><span style="text-decoration:underline">mmarim1</span></div>
<div class="t " style="left:236.60px;top:455.54px;font-size:12px;line-height:12px;font-weight:400;color:#404040;">Marimuthu M</div>
<div class="t " style="left:458.30px;top:455.54px;font-size:12px;line-height:12px;font-weight:400;color:#404040;">10:00 - 20:00 IST</div>
<div class="t" style="left:598.75px;width:70px;text-align:center;top:455.54px;font-size:12px;line-height:12px;color:#404040;"><span style="">146</span></div>
<div class="t" style="left:668.75px;width:70px;text-align:center;top:455.54px;font-size:12px;line-height:12px;color:#404040;"><span style="">0</span></div>
<div class="t" style="left:738.75px;width:70px;text-align:center;top:455.54px;font-size:12px;line-height:12px;color:#404040;"><span style="">0</span></div>
<div class="t" style="left:808.75px;width:70px;text-align:center;top:455.54px;font-size:12px;line-height:12px;color:#4d7e96;"><span style="text-decoration:underline;">111</span></div>
<div class="t" style="left:878.75px;width:70px;text-align:center;top:455.54px;font-size:12px;line-height:12px;color:#4d7e96;"><span style="text-decoration:underline;">23</span></div>
<div class="t" style="left:948.75px;width:70px;text-align:center;top:455.54px;font-size:12px;line-height:12px;color:#4d7e96;"><span style="text-decoration:underline;">4</span></div>
<div class="t" style="left:1018.75px;width:70px;text-align:center;top:455.54px;font-size:12px;line-height:12px;color:#404040;"><span style="">0</span></div>
<div class="t" style="left:1088.75px;width:70px;text-align:center;top:455.54px;font-size:12px;line-height:12px;color:#404040;"><span style="">0</span></div>
<div class="r" style="left:1165.8px;top:457px;width:9.6px;height:9.6px;border-radius:50%;background:#1e8a2e;"></div>
<div class="t " style="left:1179.70px;top:455.54px;font-size:12px;line-height:12px;font-weight:400;color:#404040;">Online</div>
<div class="t " style="left:1302.70px;top:457.74px;font-size:12px;line-height:12px;font-weight:400;color:#404040;">7.7.2.6</div>
<svg class="r" style="left:1342px;top:455.8px;" width="10" height="12.5" viewBox="0 0 10 12.5"><path d="M5.9 0 L9.4 4.3 H6.9 V12.2 H0.3 V10.7 H4.9 V4.3 H2.4 Z" fill="#222"/></svg>
<div class="t " style="left:1400.50px;top:455.54px;font-size:12px;line-height:12px;font-weight:400;color:#404040;">11/16/2021 18:25:24</div>
<div class="t " style="left:88.20px;top:491.54px;font-size:12px;line-height:12px;font-weight:400;color:#4d7e96;"><span style="text-decoration:underline">smohan15</span></div>
<div class="t " style="left:236.60px;top:491.54px;font-size:12px;line-height:12px;font-weight:400;color:#404040;">Mohana Priya S</div>
<div class="t " style="left:458.30px;top:491.54px;font-size:12px;line-height:12px;font-weight:400;color:#404040;">10:00 - 20:00 IST</div>
<div class="t" style="left:598.75px;width:70px;text-align:center;top:491.54px;font-size:12px;line-height:12px;color:#404040;"><span style="">18</span></div>
<div class="t" style="left:668.75px;width:70px;text-align:center;top:491.54px;font-size:12px;line-height:12px;color:#404040;"><span style="">0</span></div>
<div class="t" style="left:738.75px;width:70px;text-align:center;top:491.54px;font-size:12px;line-height:12px;color:#404040;"><span style="">0</span></div>
<div class="t" style="left:808.75px;width:70px;text-align:center;top:491.54px;font-size:12px;line-height:12px;color:#404040;"><span style="">0</span></div>
<div class="t" style="left:878.75px;width:70px;text-align:center;top:491.54px;font-size:12px;line-height:12px;color:#4d7e96;"><span style="text-decoration:underline;">18</span></div>
<div class="t" style="left:948.75px;width:70px;text-align:center;top:491.54px;font-size:12px;line-height:12px;color:#404040;"><span style="">0</span></div>
<div class="t" style="left:1018.75px;width:70px;text-align:center;top:491.54px;font-size:12px;line-height:12px;color:#404040;"><span style="">0</span></div>
<div class="t" style="left:1088.75px;width:70px;text-align:center;top:491.54px;font-size:12px;line-height:12px;color:#404040;"><span style="">0</span></div>
<div class="r" style="left:1165.8px;top:493px;width:9.6px;height:9.6px;border-radius:50%;background:#f0a62a;"></div>
<div class="t " style="left:1179.70px;top:491.54px;font-size:12px;line-height:12px;font-weight:400;color:#404040;">Offline</div>
<div class="t " style="left:1302.70px;top:493.74px;font-size:12px;line-height:12px;font-weight:400;color:#404040;">7.7.2.6</div>
<svg class="r" style="left:1342px;top:491.8px;" width="10" height="12.5" viewBox="0 0 10 12.5"><path d="M5.9 0 L9.4 4.3 H6.9 V12.2 H0.3 V10.7 H4.9 V4.3 H2.4 Z" fill="#222"/></svg>
<div class="t " style="left:1400.50px;top:491.54px;font-size:12px;line-height:12px;font-weight:400;color:#404040;">11/16/2021 10:48:47</div>
<div class="r" style="left:80px;top:517px;width:1485px;height:36px;background:#f9f9f9;"></div>
<div class="t " style="left:88.20px;top:527.54px;font-size:12px;line-height:12px;font-weight:400;color:#4d7e96;"><span style="text-decoration:underline">gopmonis</span></div>
<div class="t " style="left:236.60px;top:527.54px;font-size:12px;line-height:12px;font-weight:400;color:#404040;">Monisha Gopal</div>
<div class="t " style="left:458.30px;top:527.54px;font-size:12px;line-height:12px;font-weight:400;color:#404040;">10:00 - 20:00 IST</div>
<div class="t" style="left:598.75px;width:70px;text-align:center;top:527.54px;font-size:12px;line-height:12px;color:#404040;"><span style="">165</span></div>
<div class="t" style="left:668.75px;width:70px;text-align:center;top:527.54px;font-size:12px;line-height:12px;color:#404040;"><span style="">0</span></div>
<div class="t" style="left:738.75px;width:70px;text-align:center;top:527.54px;font-size:12px;line-height:12px;color:#404040;"><span style="">0</span></div>
<div class="t" style="left:808.75px;width:70px;text-align:center;top:527.54px;font-size:12px;line-height:12px;color:#404040;"><span style="">0</span></div>
<div class="t" style="left:878.75px;width:70px;text-align:center;top:527.54px;font-size:12px;line-height:12px;color:#4d7e96;"><span style="text-decoration:underline;">165</span></div>
<div class="t" style="left:948.75px;width:70px;text-align:center;top:527.54px;font-size:12px;line-height:12px;color:#404040;"><span style="">0</span></div>
<div class="t" style="left:1018.75px;width:70px;text-align:center;top:527.54px;font-size:12px;line-height:12px;color:#404040;"><span style="">0</span></div>
<div class="t" style="left:1088.75px;width:70px;text-align:center;top:527.54px;font-size:12px;line-height:12px;color:#404040;"><span style="">0</span></div>
<div class="r" style="left:1165.8px;top:529px;width:9.6px;height:9.6px;border-radius:50%;background:#1e8a2e;"></div>
<div class="t " style="left:1179.70px;top:527.54px;font-size:12px;line-height:12px;font-weight:400;color:#404040;">Online</div>
<div class="t " style="left:1302.70px;top:529.74px;font-size:12px;line-height:12px;font-weight:400;color:#404040;">7.7.2.6</div>
<svg class="r" style="left:1342px;top:527.8px;" width="10" height="12.5" viewBox="0 0 10 12.5"><path d="M5.9 0 L9.4 4.3 H6.9 V12.2 H0.3 V10.7 H4.9 V4.3 H2.4 Z" fill="#222"/></svg>
<div class="t " style="left:1400.50px;top:527.54px;font-size:12px;line-height:12px;font-weight:400;color:#404040;">11/16/2021 18:28:23</div>
<div class="t " style="left:88.20px;top:563.54px;font-size:12px;line-height:12px;font-weight:400;color:#4d7e96;"><span style="text-decoration:underline">AnaPrabu</span></div>
<div class="t " style="left:236.60px;top:563.54px;font-size:12px;line-height:12px;font-weight:400;color:#404040;">Prabu Anandan</div>
<div class="t " style="left:458.30px;top:563.54px;font-size:12px;line-height:12px;font-weight:400;color:#404040;">00:00 - 23:59 IST</div>
<div class="t" style="left:598.75px;width:70px;text-align:center;top:563.54px;font-size:12px;line-height:12px;color:#404040;"><span style="">178</span></div>
<div class="t" style="left:668.75px;width:70px;text-align:center;top:563.54px;font-size:12px;line-height:12px;color:#404040;"><span style="">0</span></div>
<div class="t" style="left:738.75px;width:70px;text-align:center;top:563.54px;font-size:12px;line-height:12px;color:#404040;"><span style="">0</span></div>
<div class="t" style="left:808.75px;width:70px;text-align:center;top:563.54px;font-size:12px;line-height:12px;color:#4d7e96;"><span style="text-decoration:underline;">11</span></div>
<div class="t" style="left:878.75px;width:70px;text-align:center;top:563.54px;font-size:12px;line-height:12px;color:#4d7e96;"><span style="text-decoration:underline;">17</span></div>
<div class="t" style="left:948.75px;width:70px;text-align:center;top:563.54px;font-size:12px;line-height:12px;color:#4d7e96;"><span style="text-decoration:underline;">4</span></div>
<div class="t" style="left:1018.75px;width:70px;text-align:center;top:563.54px;font-size:12px;line-height:12px;color:#404040;"><span style="">0</span></div>
<div class="t" style="left:1088.75px;width:70px;text-align:center;top:563.54px;font-size:12px;line-height:12px;color:#404040;"><span style="">0</span></div>
<div class="r" style="left:1165.8px;top:565px;width:9.6px;height:9.6px;border-radius:50%;background:#1e8a2e;"></div>
<div class="t " style="left:1179.70px;top:563.54px;font-size:12px;line-height:12px;font-weight:400;color:#404040;">Online</div>
<div class="t " style="left:1302.70px;top:565.74px;font-size:12px;line-height:12px;font-weight:400;color:#404040;">7.7.2.6</div>
<svg class="r" style="left:1342px;top:563.8px;" width="10" height="12.5" viewBox="0 0 10 12.5"><path d="M5.9 0 L9.4 4.3 H6.9 V12.2 H0.3 V10.7 H4.9 V4.3 H2.4 Z" fill="#222"/></svg>
<div class="t " style="left:1400.50px;top:563.54px;font-size:12px;line-height:12px;font-weight:400;color:#404040;">11/16/2021 18:26:30</div>
<div class="r" style="left:80px;top:589px;width:1485px;height:36px;background:#f9f9f9;"></div>
<div class="t " style="left:88.20px;top:599.54px;font-size:12px;line-height:12px;font-weight:400;color:#4d7e96;"><span style="text-decoration:underline">subpreet</span></div>
<div class="t " style="left:236.60px;top:599.54px;font-size:12px;line-height:12px;font-weight:400;color:#404040;">Preethi Subramaniyam</div>
<div class="t " style="left:458.30px;top:599.54px;font-size:12px;line-height:12px;font-weight:400;color:#404040;">10:00 - 20:00 IST</div>
<div class="t" style="left:598.75px;width:70px;text-align:center;top:599.54px;font-size:12px;line-height:12px;color:#404040;"><span style="">130</span></div>
<div class="t" style="left:668.75px;width:70px;text-align:center;top:599.54px;font-size:12px;line-height:12px;color:#404040;"><span style="">0</span></div>
<div class="t" style="left:738.75px;width:70px;text-align:center;top:599.54px;font-size:12px;line-height:12px;color:#404040;"><span style="">0</span></div>
<div class="t" style="left:808.75px;width:70px;text-align:center;top:599.54px;font-size:12px;line-height:12px;color:#404040;"><span style="">0</span></div>
<div class="t" style="left:878.75px;width:70px;text-align:center;top:599.54px;font-size:12px;line-height:12px;color:#4d7e96;"><span style="text-decoration:underline;">130</span></div>
<div class="t" style="left:948.75px;width:70px;text-align:center;top:599.54px;font-size:12px;line-height:12px;color:#404040;"><span style="">0</span></div>
<div class="t" style="left:1018.75px;width:70px;text-align:center;top:599.54px;font-size:12px;line-height:12px;color:#404040;"><span style="">0</span></div>
<div class="t" style="left:1088.75px;width:70px;text-align:center;top:599.54px;font-size:12px;line-height:12px;color:#404040;"><span style="">0</span></div>
<div class="r" style="left:1165.8px;top:601px;width:9.6px;height:9.6px;border-radius:50%;background:#1e8a2e;"></div>
<div class="t " style="left:1179.70px;top:599.54px;font-size:12px;line-height:12px;font-weight:400;color:#404040;">Online</div>
<div class="t " style="left:1302.70px;top:601.74px;font-size:12px;line-height:12px;font-weight:400;color:#404040;">7.7.2.6</div>
<svg class="r" style="left:1342px;top:599.8px;" width="10" height="12.5" viewBox="0 0 10 12.5"><path d="M5.9 0 L9.4 4.3 H6.9 V12.2 H0.3 V10.7 H4.9 V4.3 H2.4 Z" fill="#222"/></svg>
<div class="t " style="left:1400.50px;top:599.54px;font-size:12px;line-height:12px;font-weight:400;color:#404040;">11/16/2021 18:28:12</div>
<div class="t " style="left:88.20px;top:635.54px;font-size:12px;line-height:12px;font-weight:400;color:#4d7e96;"><span style="text-decoration:underline">rrrahul</span></div>
<div class="t " style="left:236.60px;top:635.54px;font-size:12px;line-height:12px;font-weight:400;color:#404040;">Rahul raj R R</div>
<div class="t " style="left:458.30px;top:635.54px;font-size:12px;line-height:12px;font-weight:400;color:#404040;">10:00 - 20:00 IST</div>
<div class="t" style="left:598.75px;width:70px;text-align:center;top:635.54px;font-size:12px;line-height:12px;color:#404040;"><span style="">132</span></div>
<div class="t" style="left:668.75px;width:70px;text-align:center;top:635.54px;font-size:12px;line-height:12px;color:#404040;"><span style="">0</span></div>
<div class="t" style="left:738.75px;width:70px;text-align:center;top:635.54px;font-size:12px;line-height:12px;color:#404040;"><span style="">0</span></div>
<div class="t" style="left:808.75px;width:70px;text-align:center;top:635.54px;font-size:12px;line-height:12px;color:#404040;"><span style="">0</span></div>
<div class="t" style="left:878.75px;width:70px;text-align:center;top:635.54px;font-size:12px;line-height:12px;color:#4d7e96;"><span style="text-decoration:underline;">132</span></div>
<div class="t" style="left:948.75px;width:70px;text-align:center;top:635.54px;font-size:12px;line-height:12px;color:#404040;"><span style="">0</span></div>
<div class="t" style="left:1018.75px;width:70px;text-align:center;top:635.54px;font-size:12px;line-height:12px;color:#404040;"><span style="">0</span></div>
<div class="t" style="left:1088.75px;width:70px;text-align:center;top:635.54px;font-size:12px;line-height:12px;color:#404040;"><span style="">0</span></div>
<div class="r" style="left:1165.8px;top:637px;width:9.6px;height:9.6px;border-radius:50%;background:#1e8a2e;"></div>
<div class="t " style="left:1179.70px;top:635.54px;font-size:12px;line-height:12px;font-weight:400;color:#404040;">Online</div>
<div class="t " style="left:1302.70px;top:637.74px;font-size:12px;line-height:12px;font-weight:400;color:#404040;">7.7.2.6</div>
<svg class="r" style="left:1342px;top:635.8px;" width="10" height="12.5" viewBox="0 0 10 12.5"><path d="M5.9 0 L9.4 4.3 H6.9 V12.2 H0.3 V10.7 H4.9 V4.3 H2.4 Z" fill="#222"/></svg>
<div class="t " style="left:1400.50px;top:635.54px;font-size:12px;line-height:12px;font-weight:400;color:#404040;">11/16/2021 18:29:55</div>
<div class="t " style="left:80.60px;top:672.15px;font-size:14px;line-height:14px;font-weight:400;color:#333;">Showing 1 to 10 of 28 entries</div>
<div class="r" style="left:1332px;top:663px;width:233px;height:34px;box-sizing:border-box;border:1px solid #ddd;border-radius:4px;overflow:hidden;background:#fff;">
<div class="r" style="left:0;top:0;width:79px;height:32px;background:#fff;"></div>
<div class="r" style="left:79px;top:0;width:33px;height:32px;background:#c8c8c8;"></div>
<div class="r" style="left:112px;top:0;width:32px;height:32px;background:#fafafa;border-left:1px solid #ddd;"></div>
<div class="r" style="left:144px;top:0;width:33px;height:32px;background:#fafafa;border-left:1px solid #ddd;"></div>
<div class="r" style="left:177px;top:0;width:55px;height:32px;background:#fafafa;border-left:1px solid #ddd;"></div>
</div>
<div class="t " style="left:1345.70px;top:673.15px;font-size:14px;line-height:14px;font-weight:400;color:#777;">Previous</div>
<div class="t " style="left:1424.50px;top:673.15px;font-size:14px;line-height:14px;font-weight:400;color:#555;">1</div>
<div class="t " style="left:1457.00px;top:673.15px;font-size:14px;line-height:14px;font-weight:400;color:#444;">2</div>
<div class="t " style="left:1490.00px;top:673.15px;font-size:14px;line-height:14px;font-weight:400;color:#444;">3</div>
<div class="t " style="left:1523.50px;top:673.15px;font-size:14px;line-height:14px;font-weight:400;color:#555;">Next</div>
</body></html>
